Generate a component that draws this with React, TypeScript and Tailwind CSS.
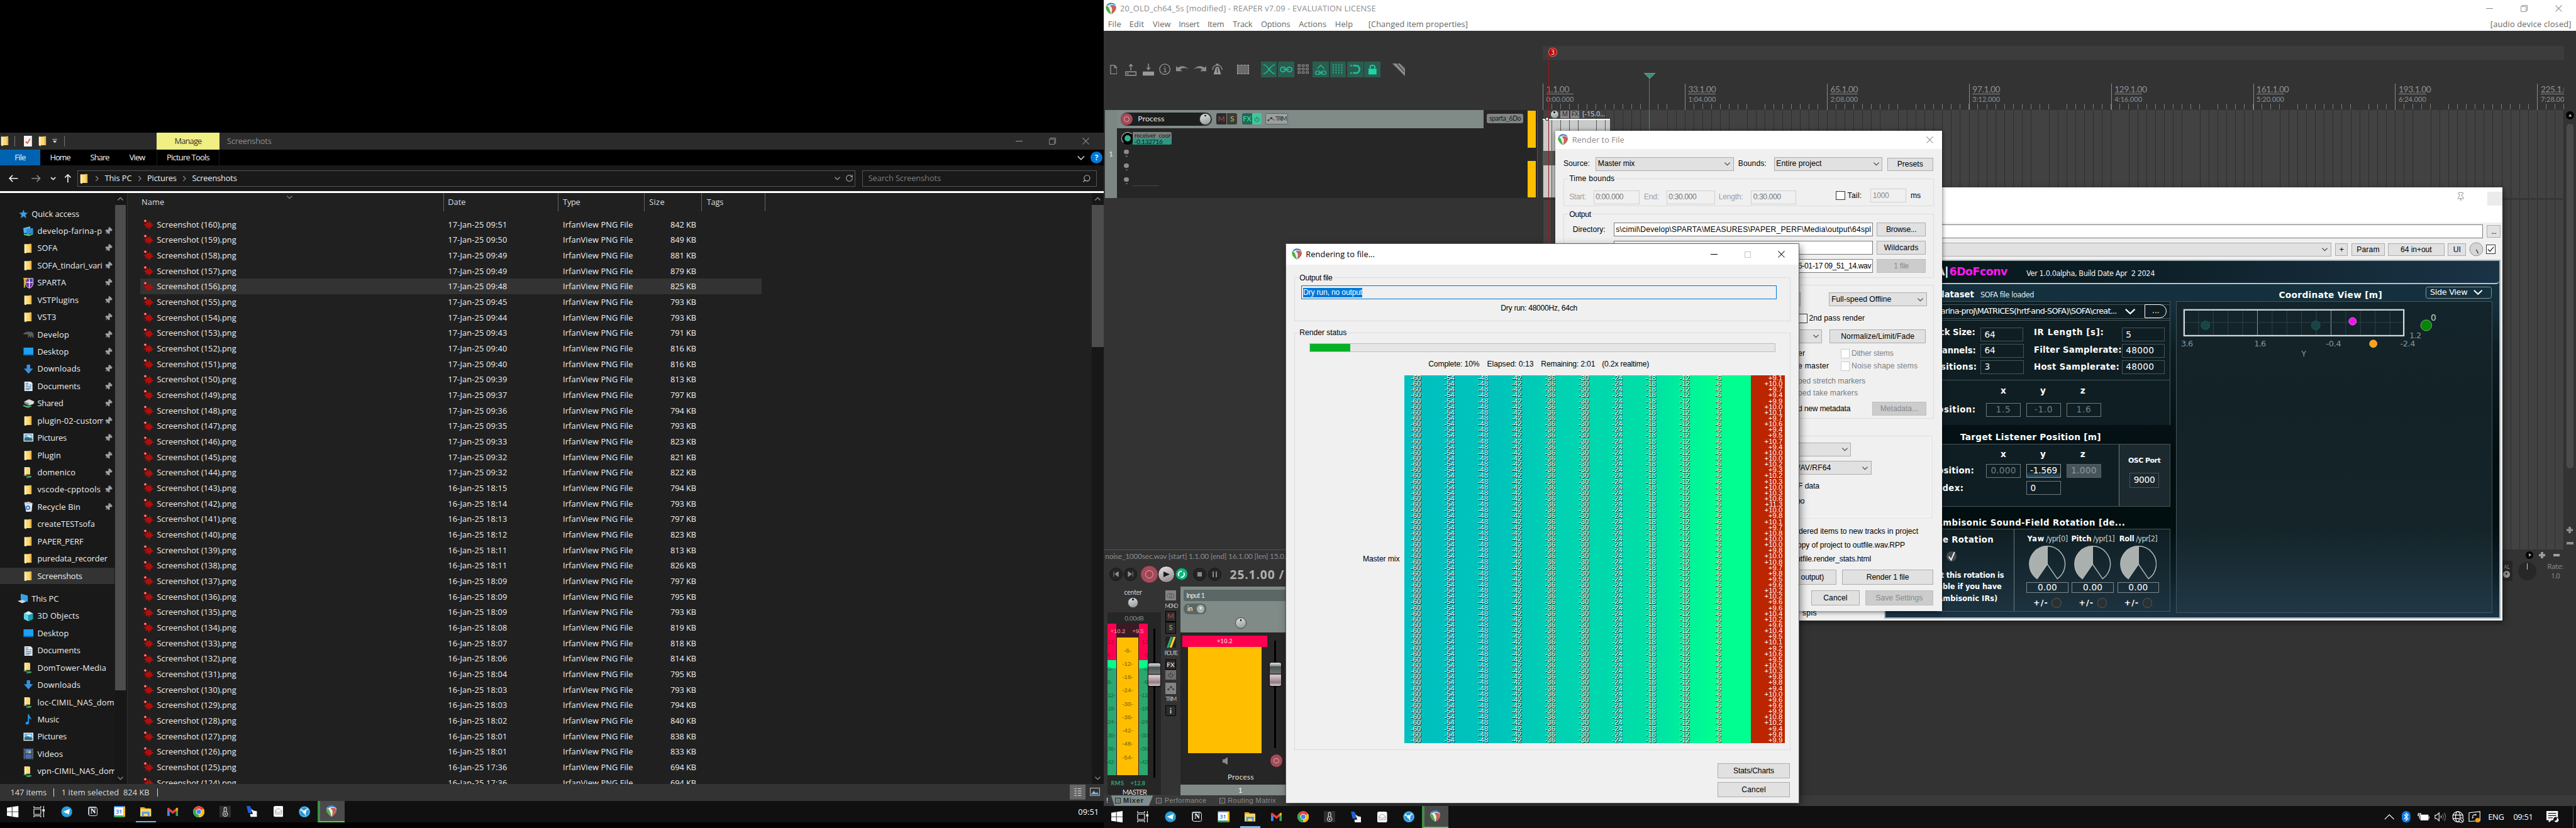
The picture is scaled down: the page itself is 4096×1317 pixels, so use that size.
import React, { useLayoutEffect, useRef } from "react";
import { Pin, Search, Power, RotateCw } from "lucide-react";

type Kids = { children?: React.ReactNode };

/* Single line of text whose tracking is adjusted so that it occupies w pixels. */
function T({ w, c = "", children }: { w: number; c?: string; children: string }) {
  const ref = useRef<HTMLSpanElement>(null);
  useLayoutEffect(() => {
    const el = ref.current!;
    el.style.letterSpacing = "0px";
    const a = el.getBoundingClientRect().width;
    el.style.letterSpacing = "1px";
    const b = el.getBoundingClientRect().width;
    const s = (b - a) / children.length;
    el.style.letterSpacing = `${(w * s - a) / (b - a)}px`;
  }, [w, children]);
  return (
    <span className={`block shrink-0 leading-none ${c}`} style={{ width: w }}>
      <span ref={ref} className="inline-block whitespace-pre">{children}</span>
    </span>
  );
}

/* ---------- icons ---------- */

const Logo = ({ s = 20 }: { s?: number }) => (
  <svg width={s} height={s} viewBox="0 0 20 20" className="shrink-0">
    <path d="M10 0.5C14.5 0.5 19 3 18.6 8.5C18.2 13 13.5 18 10 19.5C6.5 18 1.8 13 1.4 8.5C1 3 5.5 0.5 10 0.5Z" fill="#e9eef0" />
    <path d="M2.4 5.4C4 1.6 7.500 0.3 10.5 0.4C14.5 0.6 17.500 2.5 18.2 5.4C14 1.8 8 2 5 4.8Z" fill="#2f86c9" />
    <path d="M1.6 6C4.8 5.2 6.2 8 7.2 11L10.2 19.4C6 17.5 1.7 13 1.4 8.5Z" fill="#4fae3a" />
    <path d="M8 5C12.5 3.2 18 4.4 18.6 8C18.6 13 14 17.7 10.8 19.2L11.8 12C12 9 10.5 7 8 5Z" fill="#c9605a" />
  </svg>
);

const Folder = () => (
  <svg width="18" height="18" viewBox="0 0 18 18" className="shrink-0">
    <path d="M2 1.5H11V0.5L14 1V16.5H5V18L2 16.5Z" fill="#f9d978" />
    <path d="M11 1.2L14.4 2V16.5H11.5Z" fill="#e8b84e" />
    <path d="M2 1.5L5 2.6V18L2 16.6Z" fill="#fff0b8" />
  </svg>
);
const NetFolder = () => (
  <svg width="18" height="20" viewBox="0 0 18 20" className="shrink-0">
    <path d="M2 1H9.5L12 2V14H2Z" fill="#f9d978" />
    <path d="M2 1L5 2.4V15H2Z" fill="#fff0b8" />
    <path d="M0 14.5L12 16L13.5 17.5L1 16.5Z" fill="#2f9e57" />
    <path d="M5 18.5L14 16.5V18.5L6 20Z" fill="#49b86f" />
  </svg>
);
const Star = () => (
  <svg width="16" height="16" viewBox="0 0 16 16" className="shrink-0">
    <path d="M8 0.5L10 5.7L15.7 6L11.3 9.5L12.8 15.2L8 12L3.2 15.2L4.7 9.5L0.3 6L6 5.7Z" fill="#39a0ec" />
  </svg>
);
const Stack = () => (
  <svg width="18" height="18" viewBox="0 0 18 18" className="shrink-0">
    <path d="M0 4L12 1L13 12L1 13Z" fill="#4fb4ee" />
    <path d="M5 6L17 4L17 13L6 15Z" fill="#2f8fd6" />
    <path d="M1 14L12 15L17 13V15L10 18L1 16Z" fill="#64c28b" />
  </svg>
);
const Shield = () => (
  <svg width="18" height="20" viewBox="0 0 18 20" className="shrink-0">
    <path d="M4 2H17V11C17 15 14 18 11 19C7 18 4 15 4 11Z" fill="#7a2fa0" stroke="#f2f2f2" />
    <path d="M10.5 3V18M5 9H16" stroke="#fff" strokeWidth="1.4" />
    <path d="M11.5 3.5H16V8H11.5ZM5 10H9.5V16Z" fill="#2348c9" />
    <path d="M0 1H6V5L3 3V18H1V5Z" fill="#e3c62e" />
  </svg>
);
const Animal = () => (
  <svg width="18" height="12" viewBox="0 0 18 12" className="shrink-0">
    <path d="M0 4C4 1 8 0 12 1C15 0 18 3 18 6V12H16L15 7L13 12H11.500L11 6L9 11H8L8 5C5 5 3 6 0 5Z" fill="#5d5d5d" />
  </svg>
);
const DesktopI = () => (
  <svg width="18" height="16" viewBox="0 0 18 16" className="shrink-0">
    <rect x="0.500" y="1" width="17" height="13" fill="#1da0f2" />
    <path d="M0.500 12.500H17.500V14.500H0.500Z" fill="#0f6fb8" />
  </svg>
);
const DownI = () => (
  <svg width="18" height="18" viewBox="0 0 18 18" className="shrink-0">
    <path d="M6 1H12V8H17L9 17L1 8H6Z" fill="#3b8fdd" />
  </svg>
);
const DocI = () => (
  <svg width="18" height="18" viewBox="0 0 18 18" className="shrink-0">
    <path d="M2 1H13L16 4V17.500H2Z" fill="#e9eef2" />
    <path d="M4 4H9M4 7H9M11 7H14M4 10H14M4 13H14M4 15H11" stroke="#4a7fae" strokeWidth="1.200" />
  </svg>
);
const DriveI = () => (
  <svg width="20" height="16" viewBox="0 0 20 16" className="shrink-0">
    <path d="M2 5L10 1L19 5L18 9L10 12L2 8Z" fill="#d9dddd" />
    <path d="M2 5L10 8V12L2 8.500Z" fill="#8f9898" />
    <path d="M0 11L9 13L14 12V14L8 16L0 13Z" fill="#49b86f" />
  </svg>
);
const PicI = () => (
  <svg width="18" height="16" viewBox="0 0 18 16" className="shrink-0">
    <rect x="0.500" y="0.500" width="17" height="14" fill="#f2f2f2" />
    <rect x="2" y="2" width="14" height="11" fill="#6fb7e8" />
    <path d="M2 9C6 6 10 7 16 10V13H2Z" fill="#2c6a7a" />
    <path d="M6 5C8 3 12 4 15 6L11 7Z" fill="#fff" />
  </svg>
);
const BinI = () => (
  <svg width="18" height="18" viewBox="0 0 18 18" className="shrink-0">
    <path d="M2 2L16 3L14.500 17L5 18Z" fill="#dfe7ec" />
    <path d="M1 1L10 0L17 3L7 4Z" fill="#b9c7d0" />
    <circle cx="8" cy="10.500" r="3" fill="none" stroke="#1f77d0" strokeWidth="1.800" />
  </svg>
);
const PcI = () => (
  <svg width="19" height="18" viewBox="0 0 19 18" className="shrink-0">
    <path d="M6 1L17 4V14L6 10Z" fill="#2aa3ee" stroke="#8fd0f7" strokeWidth="0.700" />
    <path d="M0 13L8 11L15 14L8 17Z" fill="#d4dadd" />
  </svg>
);
const CubeI = () => (
  <svg width="18" height="18" viewBox="0 0 18 18" className="shrink-0">
    <path d="M9 0L17 4L9 7L1 4Z" fill="#c2f1f7" />
    <path d="M1 4L9 7V18L1 14Z" fill="#5cd3e3" />
    <path d="M17 4L9 7V18L17 14Z" fill="#1a9fb8" />
  </svg>
);
const MusicI = () => (
  <svg width="18" height="18" viewBox="0 0 18 18" className="shrink-0">
    <path d="M8 0H10C10 4 14 5 14 10C13 8 12 7 10 7V14C10 16.500 8.500 18 6.500 18C4.500 18 4 16.500 4 15.500C4 13.500 6 12.500 8 13Z" fill="#1d9bf0" />
  </svg>
);
const VidI = () => (
  <svg width="18" height="20" viewBox="0 0 18 20" className="shrink-0">
    <rect x="0.500" y="0.500" width="17" height="19" fill="#3c4658" />
    <path d="M1.500 1V19M16.500 1V19" stroke="#aab4c2" strokeDasharray="1.500 1.500" />
    <rect x="4" y="2" width="10" height="7" fill="#5a86c4" />
    <rect x="4" y="11" width="10" height="7" fill="#4470b0" />
    <circle cx="11" cy="7" r="2" fill="#c9c560" />
  </svg>
);
const Splat = () => (
  <svg width="20" height="20" viewBox="0 0 20 20" className="shrink-0">
    <path d="M8 5L10 7L12 2.500L13.500 7L16 7L15.500 10L20 11L15.500 13L14.500 16L12.500 14.500L11 20L9 14.500L4 16.500L6 12L1 11L5.500 8.500Z" fill="#b00f0c" />
    <circle cx="4.500" cy="4" r="3" fill="#96100e" />
    <circle cx="4.300" cy="3.600" r="1.700" fill="#dcaca8" />
  </svg>
);
const Chev = ({ c = "#444", s = 12 }: { c?: string; s?: number }) => (
  <svg width={s} height={s} viewBox="0 0 12 12" className="shrink-0">
    <path d="M1.500 4L6 8.500L10.500 4" fill="none" stroke={c} strokeWidth="1.300" />
  </svg>
);
const CloseX = ({ c, s = 12 }: { c: string; s?: number }) => (
  <svg width={s} height={s} viewBox="0 0 12 12" className="shrink-0">
    <path d="M0.500 0.500L11.500 11.500M11.500 0.500L0.500 11.500" stroke={c} strokeWidth="1.100" />
  </svg>
);
const MaxBox = ({ c }: { c: string }) => (
  <svg width="12" height="12" viewBox="0 0 12 12" className="shrink-0">
    <path d="M0.500 2.500H9.500V11.500H0.500ZM2.500 2.500V0.500H11.500V9.500H9.500" fill="none" stroke={c} />
  </svg>
);

/* ---------- file explorer ---------- */

type Nav = [React.FC, string, number, boolean];
const QUICK: Nav[] = [
  [Stack, "develop-farina-p", 112.5, true],
  [Folder, "SOFA", 35, true],
  [Folder, "SOFA_tindari_vari", 113, true],
  [Shield, "SPARTA", 50, true],
  [Folder, "VSTPlugins", 72, true],
  [Folder, "VST3", 33, true],
  [Animal, "Develop", 55.5, true],
  [DesktopI, "Desktop", 54.5, true],
  [DownI, "Downloads", 75, true],
  [DocI, "Documents", 75, true],
  [DriveI, "Shared", 45, true],
  [Folder, "plugin-02-custom", 117, true],
  [PicI, "Pictures", 51, true],
  [Folder, "Plugin", 41, true],
  [NetFolder, "domenico", 66.5, true],
  [Folder, "vscode-cpptools", 110, true],
  [BinI, "Recycle Bin", 75, true],
  [Folder, "createTESTsofa", 100, false],
  [Folder, "PAPER_PERF", 80, false],
  [Folder, "puredata_recorder", 122, false],
  [Folder, "Screenshots", 78, false],
];
const THISPC: Nav[] = [
  [CubeI, "3D Objects", 73, false],
  [DesktopI, "Desktop", 54.5, false],
  [DocI, "Documents", 75, false],
  [NetFolder, "DomTower-Media", 120, false],
  [DownI, "Downloads", 75, false],
  [NetFolder, "loc-CIMIL_NAS_dom", 134, false],
  [MusicI, "Music", 38, false],
  [PicI, "Pictures", 51, false],
  [VidI, "Videos", 44.5, false],
  [NetFolder, "vpn-CIMIL_NAS_dom", 137, false],
];

const FILES: [string, string][] = [
  ["17-Jan-25 09:51", "842"], ["17-Jan-25 09:50", "849"], ["17-Jan-25 09:49", "881"], ["17-Jan-25 09:49", "879"],
  ["17-Jan-25 09:48", "825"], ["17-Jan-25 09:45", "793"], ["17-Jan-25 09:44", "793"], ["17-Jan-25 09:43", "791"],
  ["17-Jan-25 09:40", "816"], ["17-Jan-25 09:40", "816"], ["17-Jan-25 09:39", "813"], ["17-Jan-25 09:37", "797"],
  ["17-Jan-25 09:36", "794"], ["17-Jan-25 09:35", "793"], ["17-Jan-25 09:33", "823"], ["17-Jan-25 09:32", "821"],
  ["17-Jan-25 09:32", "822"], ["16-Jan-25 18:15", "794"], ["16-Jan-25 18:14", "793"], ["16-Jan-25 18:13", "797"],
  ["16-Jan-25 18:12", "823"], ["16-Jan-25 18:11", "813"], ["16-Jan-25 18:11", "826"], ["16-Jan-25 18:09", "797"],
  ["16-Jan-25 18:09", "795"], ["16-Jan-25 18:09", "793"], ["16-Jan-25 18:08", "819"], ["16-Jan-25 18:07", "818"],
  ["16-Jan-25 18:06", "814"], ["16-Jan-25 18:04", "795"], ["16-Jan-25 18:03", "793"], ["16-Jan-25 18:03", "794"],
  ["16-Jan-25 18:02", "840"], ["16-Jan-25 18:01", "838"], ["16-Jan-25 18:01", "833"], ["16-Jan-25 17:36", "694"],
  ["16-Jan-25 17:36", "694"],
];

const NavRow = ({ n, sel }: { n: Nav; sel?: boolean }) => {
  const [Icon, label, w, pin] = n;
  return (
    <div className="flex h-[30px] w-[199px] shrink-0 items-center">
      <div className={`flex h-[28px] w-full items-center overflow-hidden ${sel ? "bg-[#333333]" : ""}`}>
        <div className="ml-[41px] flex w-[24px] shrink-0 items-center"><Icon /></div>
        <div className={`shrink-0 overflow-hidden ${pin ? "w-[114px]" : "w-[134px]"}`}>
          <T w={w} c="py-1">{label}</T>
        </div>
        {pin && <Pin size={14} className="ml-[3px] rotate-45 fill-[#9aa0a4] text-[#9aa0a4]" />}
      </div>
    </div>
  );
};

function Explorer() {
  return (
    <div className="absolute left-0 top-[231px] flex h-[1162px] w-[1920px] flex-col bg-[#202020] font-['Open_Sans',sans-serif] text-[14px] text-[#f0f0f0]">
      <div className="flex h-[29px] items-center bg-[#2b2b2b]">
        <div className="flex w-[272px] items-center">
          <Folder />
          <div className="ml-[7px] h-[18px] w-px bg-[#777]" />
          <svg width="14" height="19" viewBox="0 0 14 19" className="ml-[16px]"><rect width="14" height="19" fill="#f4f4f4" /><path d="M3 10L6 13L11 5" fill="none" stroke="#d2552c" strokeWidth="1.800" /></svg>
          <div className="ml-[10px]"><Folder /></div>
          <svg width="9" height="8" viewBox="0 0 9 8" className="ml-[7px]"><path d="M0.500 0.500H8.500" stroke="#ddd" /><path d="M1 3H8L4.500 7Z" fill="#ddd" /></svg>
          <div className="ml-[12px] h-[18px] w-px bg-[#777]" />
        </div>
        <div className="flex h-full w-[110px] items-center justify-center bg-[#efef83] text-[#333]"><T w={47}>Manage</T></div>
        <T w={77} c="ml-[13px] text-[#8f8f8f]">Screenshots</T>
        <div className="ml-auto flex items-center gap-[46px] pr-[26px]">
          <div className="h-px w-[12px] bg-[#999]" /><MaxBox c="#999" /><CloseX c="#999" />
        </div>
      </div>
      <div className="flex h-[28px] items-center bg-black">
        <div className="flex h-full w-[70px] items-center justify-center bg-[#0063b1]"><T w={19}>File</T></div>
        <T w={35} c="ml-[17px]">Home</T>
        <T w={33} c="ml-[35px]">Share</T>
        <T w={27} c="ml-[35px]">View</T>
        <div className="ml-[20px] flex h-full w-[110px] items-center justify-center border-x border-[#1c1c1c]"><T w={74}>Picture Tools</T></div>
        <div className="ml-auto flex items-center gap-[9px] pr-[3px]">
          <Chev c="#ddd" s={15} />
          <div className="flex size-[20px] items-center justify-center rounded-full bg-[#0078d7] text-[13px] font-bold leading-none">?</div>
        </div>
      </div>
      <div className="flex h-[45px] items-center bg-[#191919]">
        <svg width="134" height="28" viewBox="0 0 134 28" fill="none" strokeWidth="1.800" className="shrink-0">
          <path d="M31 14H17M22 8.500L16.500 14L22 19.500" stroke="#f0f0f0" />
          <path d="M55 14H69M64 8.500L69.500 14L64 19.500" stroke="#888" />
          <path d="M88.500 12L92.500 16L96.500 12" stroke="#f0f0f0" />
          <path d="M118 21V8M113 12.500L118 7.500L123 12.500" stroke="#f0f0f0" />
        </svg>
        <div className="flex h-[28px] w-[1354px] items-center border border-[#535353]">
          <div className="ml-[3px]"><Folder /></div>
          <div className="ml-[7px] -rotate-90"><Chev c="#999" s={11} /></div>
          <T w={47} c="ml-[8px]">This PC</T>
          <div className="ml-[8px] -rotate-90"><Chev c="#999" s={11} /></div>
          <T w={51} c="ml-[8px]">Pictures</T>
          <div className="ml-[8px] -rotate-90"><Chev c="#999" s={11} /></div>
          <T w={78} c="ml-[8px]">Screenshots</T>
          <div className="ml-auto flex items-center gap-[8px] pr-[3px]"><Chev c="#aaa" /><RotateCw size={14} className="text-[#aaa]" /></div>
        </div>
        <div className="ml-[12px] flex h-[28px] w-[408px] items-center border border-[#535353]">
          <T w={126} c="ml-[9px] text-[#7d7d7d]">Search Screenshots</T>
          <Search size={15} className="ml-auto mr-[10px] -scale-x-100 text-[#bbb]" />
        </div>
      </div>
      <div className="h-[3px] shrink-0 bg-white" />
      <div className="flex h-[1028px] shrink-0 overflow-hidden">
        <div className="flex w-[200px] shrink-0 flex-col overflow-hidden bg-[#191919]">
          <div className="mt-[21px] flex h-[30px] shrink-0 items-center"><div className="ml-[33px] w-[22px]"><Star /></div><T w={83}>Quick access</T></div>
          {QUICK.map((n, i) => <NavRow key={i} n={n} sel={i === 20} />)}
          <div className="mt-[10px] flex h-[30px] shrink-0 items-center"><div className="ml-[31px] w-[24px]"><PcI /></div><T w={47}>This PC</T></div>
          {THISPC.map((n, i) => <NavRow key={i} n={n} />)}
        </div>
        <div className="flex w-[19px] shrink-0 flex-col items-center bg-[#171717]">
          <div className="flex h-[21px] rotate-180 items-center"><Chev c="#999" /></div>
          <div className="h-[844px] w-full bg-[#4d4d4d]" />
          <div className="mt-auto flex h-[21px] items-center"><Chev c="#999" /></div>
        </div>
        <div className="w-[3px] shrink-0 border-r border-[#303030] bg-[#191919]" />
        <div className="w-[1677px] overflow-hidden">
          <div className="relative flex h-[32px] items-center">
            <div className="absolute left-[276px] top-[1px]"><Chev c="#888" /></div>
            <T w={40} c="ml-[24px] text-[#dedede]">Name</T>
            <div className="ml-[485px] flex h-full w-[199px] items-center border-l border-[#636363] pl-[7px] text-[#dedede]"><T w={31}>Date</T></div>
            <div className="flex h-full w-[150px] items-center border-l border-[#636363] pl-[8px] text-[#dedede]"><T w={30}>Type</T></div>
            <div className="flex h-full w-[100px] items-center border-l border-[#636363] pl-[8px] text-[#dedede]"><T w={27}>Size</T></div>
            <div className="flex h-full w-[111px] items-center border-x border-[#636363] pl-[8px] text-[#dedede]"><T w={29}>Tags</T></div>
          </div>
          <div className="mt-[9px] flex flex-col">
            {FILES.map(([d, s], i) => (
              <div key={i} className={`ml-[22px] flex h-[27px] w-[1081px] shrink-0 items-center ${i === 4 ? "bg-[#333333]" : ""}`}>
                <div className="ml-[4px] w-[25px]"><Splat /></div>
                <T w={138}>{`Screenshot (${160 - i}).png`}</T>
                <T w={103} c="ml-[368px]">{d}</T>
                <T w={122} c="ml-[97px]">IrfanView PNG File</T>
                <T w={45} c="ml-[65px]">{`${s} KB`}</T>
              </div>
            ))}
          </div>
        </div>
        <div className="flex w-[21px] shrink-0 flex-col items-center bg-[#171717]">
          <div className="flex h-[21px] rotate-180 items-center"><Chev c="#999" /></div>
          <div className="h-[247px] w-full bg-[#4d4d4d]" />
          <div className="mt-auto flex h-[21px] items-center"><Chev c="#999" /></div>
        </div>
      </div>
      <div className="flex h-[29px] items-center bg-[#333333] text-[#dcdcdc]">
        <T w={63} c="ml-[18px]">147 items</T>
        <div className="ml-[12px] h-[14px] w-px bg-[#ddd]" />
        <T w={153} c="ml-[13px]">1 item selected  824 KB</T>
        <div className="ml-[13px] h-[14px] w-px bg-[#ddd]" />
        <div className="ml-auto flex h-full items-center gap-[4px] pr-[4px]">
          <svg width="28" height="26" viewBox="0 0 28 26"><rect width="28" height="26" fill="#666" /><path d="M8 7H12M8 11H12M8 15H12M8 19H12M14 7H20M14 11H20M14 15H20M14 19H20" stroke="#eee" /></svg>
          <svg width="24" height="26" viewBox="0 0 24 26"><rect x="4" y="6" width="16" height="13" fill="none" stroke="#ccc" /><path d="M5 17L10 11L14 15L16 13L19 17Z" fill="#7fb8e8" /></svg>
        </div>
      </div>
    </div>
  );
}

/* ---------- taskbar ---------- */

const TASK: React.ReactNode[] = [
  <svg width="20" height="20" viewBox="0 0 20 20" className="mr-[3px]"><path d="M0 3L8.500 1.700V9.500H0ZM9.500 1.500L20 0V9.500H9.500ZM0 10.500H8.500V18.300L0 17ZM9.500 10.500H20V20L9.500 18.500Z" fill="#fff" /></svg>,
  <svg width="20" height="20" viewBox="0 0 20 20" fill="none" stroke="#eee" strokeWidth="1.300" className="mr-[5px]"><path d="M1 0V3H13V0M1 20V17H13V20M1 5.500H13V14.500H1ZM18 0V5M18 10V20" /><path d="M16.500 6H19.500V9H16.500Z" fill="#eee" /></svg>,
  <svg width="20" height="20" viewBox="0 0 20 20"><circle cx="10" cy="10" r="9.500" fill="#2a9fd8" /><path d="M3.500 10L15.500 5L13.500 15L9.500 12L8 14V11.500Z" fill="#fff" /></svg>,
  <div className="flex size-[16px] items-center justify-center rounded-[3px] border border-[#ddd] bg-[#181818] font-['Liberation_Serif',serif] text-[13px] font-bold leading-none text-white shadow-[-1px_-1px_0_#bbb]">N</div>,
  <div className="flex size-[20px] items-center justify-center rounded-[2px] border-b-[4px] border-l-[2px] border-r-[4px] border-t-[3px] border-b-[#34a853] border-l-[#4285f4] border-r-[#fbbc04] border-t-[#4285f4] bg-white text-[10px] font-semibold leading-none text-[#2f6fe0]">31</div>,
  <svg width="19" height="18" viewBox="0 0 19 18"><path d="M0 1H7L9 3H18V7H0Z" fill="#e9a828" /><rect y="4" width="19" height="13" fill="#fbd667" /><path d="M3 17V9H16V17H13V12H6V17Z" fill="#4a9ce0" /></svg>,
  <svg width="19" height="16" viewBox="0 0 19 16"><path d="M0 2V15H4V7L9.500 11.500L15 7V15H19V2L17 0.500L9.500 6.500L2 0.500Z" fill="#ea4335" /><path d="M0 4V15H4V7Z" fill="#4285f4" /><path d="M19 4V15H15V7Z" fill="#34a853" /><path d="M15 2.200L17 0.500L19 2V4L15 7Z" fill="#fbbc04" /></svg>,
  <svg width="20" height="20" viewBox="0 0 20 20"><circle cx="10" cy="10" r="9.800" fill="#fff" /><path d="M10 10L1.500 5.100A9.800 9.800 0 0 1 18.500 5.100Z" fill="#ea4335" /><path d="M10 10L18.500 5.100A9.800 9.800 0 0 1 10 19.800Z" fill="#fbbc04" /><path d="M10 10L10 19.800A9.800 9.800 0 0 1 1.500 5.100Z" fill="#34a853" /><circle cx="10" cy="10" r="5" fill="#fff" /><circle cx="10" cy="10" r="3.900" fill="#4285f4" /></svg>,
  <svg width="20" height="20" viewBox="0 0 20 20"><rect width="20" height="20" fill="#2e2e2e" /><g fill="none" stroke="#c4c4c4" strokeWidth="1.500"><circle cx="10" cy="14" r="4" /><path d="M8 10V4C8 2 12 2 12 4V10" /></g><circle cx="10" cy="14" r="1.300" fill="#ddd" /></svg>,
  <svg width="18" height="19" viewBox="0 0 18 19"><path d="M0 0H6L10 8L8 12H3Z" fill="#1f62d6" /><path d="M8 5L12 8L18 9V19H7L6 14H11Z" fill="#f4f4f4" /></svg>,
  <svg width="17" height="19" viewBox="0 0 17 19"><rect width="17" height="19" rx="3" fill="#fafafa" /><path d="M3 8L8.500 4L14 8V14H3ZM3 9L8.500 12L14 9" fill="none" stroke="#999" /></svg>,
  <svg width="20" height="20" viewBox="0 0 20 20"><circle cx="10" cy="10" r="9.800" fill="#2593d4" /><circle cx="10" cy="10" r="8" fill="none" stroke="#9bd4f0" strokeWidth="0.800" /><g stroke="#fff" strokeWidth="1.800" fill="none"><path d="M10 10L4 7M10 10L15 5M10 10L12 16" /></g><circle cx="10" cy="10" r="3" fill="#fff" /><circle cx="4.500" cy="7" r="2" fill="#bfe3f5" /><circle cx="15" cy="5.500" r="1.700" fill="#bfe3f5" /></svg>,
  <Logo s={20} />,
];

const TaskIcons = () => (
  <div className="ml-px flex h-full">
    {TASK.map((t, i) => (
      <div
        key={i}
        className={
          i === 12
            ? "flex h-full w-[46px] items-center justify-center border-b-[3px] border-l-[5px] border-b-[#48d848] border-l-[#3f8f45] bg-[#4a4a4a] pr-[3px]"
            : i === 5
              ? "flex h-full w-[46px] flex-col items-center justify-between pt-[10px]"
              : "flex h-full w-[46px] items-center justify-center"
        }
      >
        {t}
        {i === 5 && <div className="h-[3px] w-[35px] bg-[#76b9ed]" />}
      </div>
    ))}
  </div>
);

const Tray = () => (
  <div className="ml-auto flex h-full items-center text-white">
    <svg width="18" height="11" viewBox="0 0 18 11"><path d="M1 10L9 2L17 10" fill="none" stroke="#fff" strokeWidth="1.300" /></svg>
    <svg width="15" height="20" viewBox="0 0 15 20" className="ml-[13px]"><rect width="15" height="20" rx="7" fill="#0a7ce8" /><path d="M4 6L11 13L7.500 16V4L11 7L4 14" fill="none" stroke="#fff" strokeWidth="1.300" /></svg>
    <svg width="21" height="14" viewBox="0 0 21 14" className="ml-[12px]"><rect x="5" y="3" width="14" height="10" fill="#fff" /><path d="M20 6V10M1 2H6V5H1ZM2 0V2M5 0V2M3.500 5V10" stroke="#fff" strokeWidth="1.200" fill="none" /></svg>
    <svg width="21" height="18" viewBox="0 0 21 18" className="ml-[9px]"><path d="M1 6H4L8 2V16L4 12H1Z" fill="none" stroke="#fff" strokeWidth="1.200" /><path d="M11 7Q12.500 9 11 11" stroke="#fff" fill="none" strokeWidth="1.200" /><path d="M14 4.500Q17 9 14 13.500M17 2Q21.500 9 17 16" stroke="#777" fill="none" strokeWidth="1.200" /></svg>
    <svg width="21" height="21" viewBox="0 0 21 21" className="ml-[9px]" fill="none" stroke="#fff" strokeWidth="1.200"><circle cx="10" cy="10" r="9" /><ellipse cx="10" cy="10" rx="4" ry="9" /><path d="M1 7H19M1 13H12" /><circle cx="16" cy="16" r="4" fill="#101010" /><path d="M13.500 13.500L18.500 18.500" /></svg>
    <svg width="22" height="20" viewBox="0 0 22 20" className="ml-[8px]" fill="none" stroke="#fff" strokeWidth="1.200"><path d="M1 3L20 1V17L1 18Z" /><path d="M7 9A4 4 0 0 1 13 7V5M13 7H10.500M7 13V10.500H9" /><circle cx="16" cy="16" r="4" fill="#f59a0c" stroke="none" /></svg>
    <T w={28} c="ml-[12px] text-[14px]">ENG</T>
    <T w={34} c="ml-[16px] text-[14px]">09:51</T>
    <svg width="21" height="20" viewBox="0 0 21 20" className="ml-[24px]"><path d="M0 0H20V16H9L4 20V16H0Z" fill="#fff" /><path d="M3 4H17M3 8H17M3 12H11" stroke="#101010" strokeWidth="1.300" /><circle cx="16.500" cy="15" r="4.500" fill="#101010" /><path d="M18 11.500A4 4 0 1 1 13.500 17A4 4 0 0 0 18 11.500Z" fill="#fff" /></svg>
    <div className="ml-[24px] mr-[5px] h-full w-px bg-[#555]" />
  </div>
);

/* ---------- classic dialog controls ---------- */

const Btn = ({ c, w, t, off }: { c: string; w: number; t: string; off?: boolean }) => (
  <div className={`flex shrink-0 items-center justify-center border ${off ? "border-[#bfbfbf] bg-[#cccccc] text-[#8a8a8a]" : "border-[#adadad] bg-[#e1e1e1]"} ${c}`}>
    <T w={w}>{t}</T>
  </div>
);
const Combo = ({ c, children }: { c: string } & Kids) => (
  <div className={`flex h-[24px] shrink-0 items-center border border-[#adadad] bg-[#e1e1e1] pr-[4px] ${c}`}>
    {children}
    <div className="ml-auto"><Chev s={12} /></div>
  </div>
);
const Check = ({ c, off }: { c: string; off?: boolean }) => (
  <div className={`size-[16px] shrink-0 border bg-white ${off ? "border-[#cccccc]" : "border-[#333]"} ${c}`} />
);

const VALUES = "9.1,10.0,9.7,9.4,9.9,10.0,10.1,9.7,10.6,9.4,9.5,10.7,9.4,10.0,10.0,10.2,9.3,10.2,10.3,10.0,10.3,10.6,11.3,10.0,9.8,10.1,9.7,10.8,10.0,10.0,9.8,10.0,10.8,9.7,9.8,9.5,9.6,10.2,10.2,9.6,9.6,10.4,10.2,9.6,10.4,9.5,10.1,9.2,10.6,9.5,10.5,10.3,9.8,9.8,9.4,10.0,9.6,9.6,9.9,10.8,10.2,9.4,9.8,9.9".split(",");
const DBS = [60, 54, 48, 42, 36, 30, 24, 18, 12, 6];

function RenderingDialog() {
  return (
    <div className="absolute left-[2237px] top-[424px] flex h-[973px] w-[891px] flex-col bg-[#f0f0f0] font-['Liberation_Sans',Arial,sans-serif] text-[13.3px] text-black shadow-[0_0_0_1px_#5a5a5a,3px_4px_14px_rgba(0,0,0,0.55)]">
      <div className="flex h-[37px] items-center bg-white pl-[9px] font-['Open_Sans',sans-serif] text-[14px]">
        <Logo />
        <T w={120} c="ml-[5px]">Rendering to file...</T>
        <div className="ml-auto flex items-center gap-[47px] pr-[24px]">
          <div className="h-px w-[12px] bg-black" />
          <div className="size-[11px] border border-[#c4c4c4]" />
          <CloseX c="#111" />
        </div>
      </div>
      <fieldset className="ml-[14px] mt-[14px] h-[84px] w-[863px] border border-[#dcdcdc]">
        <legend className="ml-[6px] flex h-[16px] items-center px-[2px]"><T w={57}>Output file</T></legend>
        <div className="ml-[11px] mt-[6px] flex h-[24px] w-[827px] items-center border border-[#0078d7] pl-[2px]">
          <div className="flex h-[17px] items-center bg-[#0078d7] text-white"><T w={103}>Dry run, no output</T></div>
        </div>
        <div className="ml-[358px] mt-[7px] flex h-[16px] items-center"><T w={133}>Dry run: 48000Hz, 64ch</T></div>
      </fieldset>
      <fieldset className="ml-[14px] mt-[12px] h-[734px] w-[863px] border border-[#dcdcdc]">
        <legend className="ml-[6px] flex h-[16px] items-center px-[2px]"><T w={82}>Render status</T></legend>
        <div className="ml-[25px] mt-[10px] h-[16px] w-[811px] border border-[#bcbcbc] bg-[#e6e6e6]"><div className="h-full w-[70px] bg-[#06b025]" /></div>
        <div className="ml-[232px] mt-[12px] flex h-[16px] items-center">
          <T w={89}>Complete: 10%</T>
          <T w={81} c="ml-[13px]">Elapsed: 0:13</T>
          <T w={94} c="ml-[13px]">Remaining: 2:01</T>
          <T w={82} c="ml-[12px]">(0.2x realtime)</T>
        </div>
        <div className="ml-[118px] mt-[12px] flex h-[640px] items-center">
          <T w={64}>Master mix</T>
          <div className="ml-[8px] flex h-[640px] w-[662px] overflow-hidden bg-[linear-gradient(90deg,#00bfc0_0%,#00c4bb_25%,#00d2b2_42%,#00e0a6_65%,#00ff90_82%)] text-[12.500px] leading-[10px] text-white">
            <div className="-ml-[9px] flex">
              {DBS.map((d) => (
                <div key={d} className="flex w-[58.4px] flex-col items-center [text-shadow:1px_1px_0_#000]">
                  {VALUES.map((_, i) => <span key={i} className="block h-[10px]">-{d}</span>)}
                </div>
              ))}
            </div>
            <div className="ml-auto flex w-[59px] flex-col items-end bg-[#bb2600] pr-[4px]">
              {VALUES.map((v, i) => <span key={i} className="block h-[10px]">+{v}</span>)}
            </div>
          </div>
        </div>
      </fieldset>
      <Btn c="ml-[750px] mt-[23px] h-[26px] w-[126px]" w={71} t="Stats/Charts" />
      <Btn c="ml-[750px] mt-[7px] h-[26px] w-[126px]" w={42} t="Cancel" />
    </div>
  );
}

function RenderToFile() {
  return (
    <div className="absolute left-[2705px] top-[228px] flex h-[835px] w-[672px] flex-col bg-[#f0f0f0] font-['Liberation_Sans',Arial,sans-serif] text-[13.3px] text-black shadow-[0_1px_8px_rgba(0,0,0,0.6)]">
      <div className="flex h-[31px] items-center bg-white pl-[3px] font-['Open_Sans',sans-serif] text-[14px] text-[#8c8c8c]">
        <Logo />
        <T w={91} c="ml-[6px]">Render to File</T>
        <div className="ml-auto mr-[15px]"><CloseX c="#888" /></div>
      </div>
      <div className="mt-[14px] flex h-[24px] items-center">
        <T w={46} c="ml-[14px]">Source:</T>
        <Combo c="ml-[10px] w-[240px]"><T w={64} c="ml-[3px]">Master mix</T></Combo>
        <T w={49} c="ml-[8px]">Bounds:</T>
        <Combo c="ml-[13px] w-[189px]"><T w={79} c="ml-[3px]">Entire project</T></Combo>
        <Btn c="ml-[8px] h-[22px] w-[80px] self-end" w={45} t="Presets" />
      </div>
      <fieldset className="ml-[14px] mt-[6px] h-[56px] w-[644px] border border-[#dcdcdc]">
        <legend className="ml-[7px] flex h-[16px] items-center px-[2px]"><T w={79}>Time bounds</T></legend>
        <div className="mt-[9px] flex h-[27px] items-end text-[#a0a0a0]">
          <div className="flex h-[24px] items-center">
            <T w={29} c="ml-[9px]">Start:</T>
            <div className="ml-[13px] flex h-full w-[80px] items-center border border-[#cfcfcf] pl-[3px] text-[#777]"><T w={48}>0:00.000</T></div>
            <T w={26} c="ml-[8px]">End:</T>
            <div className="ml-[13px] flex h-full w-[85px] items-center border border-[#cfcfcf] pl-[3px] text-[#777]"><T w={48}>0:30.000</T></div>
            <T w={42} c="ml-[6px]">Length:</T>
            <div className="ml-[14px] flex h-full w-[79px] items-center border border-[#cfcfcf] pl-[3px] text-[#777]"><T w={48}>0:30.000</T></div>
          </div>
          <div className="flex h-[24px] items-center self-start text-black">
            <Check c="ml-[69px]" />
            <T w={25} c="ml-[4px]">Tail:</T>
            <div className="ml-[15px] flex h-full w-[62px] items-center border border-[#cfcfcf] pl-[3px] text-[#8a8a8a]"><T w={28}>1000</T></div>
            <T w={17} c="ml-[8px]">ms</T>
          </div>
        </div>
      </fieldset>
      <fieldset className="ml-[14px] mt-[6px] h-[118px] w-[644px] border border-[#dcdcdc]">
        <legend className="ml-[7px] flex h-[16px] items-center px-[2px]"><T w={38}>Output</T></legend>
        <div className="mt-[6px] flex flex-col gap-[8px]">
          <div className="flex h-[24px] items-center">
            <T w={57} c="ml-[15px]">Directory:</T>
            <div className="ml-[15px] flex h-full w-[450px] items-center border border-[#7a7a7a] bg-white pl-[2px]"><T w={444}>{"s\\cimil\\Develop\\SPARTA\\MEASURES\\PAPER_PERF\\Media\\output\\64spl"}</T></div>
            <Btn c="ml-[7px] h-full w-[85px]" w={53} t="Browse..." />
          </div>
          <div className="flex h-[24px]">
            <div className="ml-[87px] h-full w-[450px] border border-[#7a7a7a] bg-white" />
            <Btn c="ml-[7px] h-full w-[85px]" w={60} t="Wildcards" />
          </div>
          <div className="flex h-[24px]">
            <div className="ml-[87px] flex h-full w-[450px] items-center justify-end border border-[#7a7a7a] bg-white pr-[2px]"><T w={127}>5-01-17 09_51_14.wav</T></div>
            <Btn c="ml-[7px] h-full w-[85px]" w={26} t="1 file" off />
          </div>
        </div>
      </fieldset>
      <div className="ml-[14px] mt-[12px] flex h-[234px] w-[644px] shrink-0 flex-col border border-[#dcdcdc]">
        <div className="mt-[13px] flex h-[24px]">
          <Combo c="w-[411px]" />
          <Combo c="ml-[50px] w-[170px]"><T w={104} c="ml-[3px]">Full-speed Offline</T></Combo>
        </div>
        <div className="mt-[13px] flex h-[16px] items-center"><Check c="ml-[407px]" /><T w={97} c="ml-[3px]">2nd pass render</T></div>
        <div className="mt-[11px] flex h-[24px]">
          <Combo c="w-[449px]" />
          <Btn c="ml-[13px] h-[24px] w-[167px]" w={128} t="Normalize/Limit/Fade" />
        </div>
        <div className="mt-[10px] flex h-[16px] items-center"><T w={12} c="ml-[407px]">er</T><Check c="ml-[62px]" off /><T w={73} c="ml-[3px] text-[#838383]">Dither stems</T></div>
        <div className="mt-[6px] flex h-[16px] items-center"><T w={54} c="ml-[407px]">e master</T><Check c="ml-[20px]" off /><T w={115} c="ml-[3px] text-[#838383]">Noise shape stems</T></div>
        <div className="mt-[10px] flex h-[16px] items-center text-[#7a7a7a]"><T w={117} c="ml-[407px]">ped stretch markers</T></div>
        <div className="mt-[5px] flex h-[16px] items-center text-[#7a7a7a]"><T w={104} c="ml-[407px]">ped take markers</T></div>
        <div className="mt-[7px] flex h-[24px] items-center"><T w={91} c="ml-[407px]">d new metadata</T><Btn c="ml-[38px] h-[24px] w-[94px]" w={66} t="Metadata..." off /></div>
      </div>
      <div className="ml-[14px] mt-[29px] flex h-[143px] w-[641px] shrink-0 flex-col border border-[#dcdcdc] shadow-[inset_-1px_-1px_0_#fff]">
        <Combo c="mt-[11px] w-[499px]" />
        <Combo c="mt-[8px] w-[535px]"><T w={57} c="ml-[406px]">/AV/RF64</T></Combo>
        <div className="mt-[12px] flex h-[16px] items-center"><T w={37} c="ml-[407px]">F data</T></div>
        <div className="mt-[10px] flex h-[16px] items-center"><T w={14} c="ml-[404px]">po</T></div>
      </div>
      <div className="mt-[15px] flex h-[16px] items-center"><T w={208} c="ml-[423px]">dered items to new tracks in project</T></div>
      <div className="mt-[8px] flex h-[16px] items-center"><T w={187} c="ml-[421px]">opy of project to outfile.wav.RPP</T></div>
      <div className="mt-[8px] flex h-[16px] items-center"><T w={130} c="ml-[419px]">utfile.render_stats.html</T></div>
      <div className="mt-[11px] flex h-[26px] items-center">
        <div className="ml-[395px] flex h-full w-[94px] items-center border border-[#adadad] bg-[#e1e1e1] pl-[31px]"><T w={40}>output)</T></div>
        <Btn c="ml-[10px] h-full w-[158px]" w={74} t="Render 1 file" />
      </div>
      <div className="mt-[10px] flex h-[26px] items-center">
        <Btn c="ml-[445px] h-full w-[84px]" w={42} t="Cancel" />
        <Btn c="ml-[10px] h-full w-[118px]" w={82} t="Save Settings" off />
      </div>
    </div>
  );
}

/* ---------- 6DoFconv plug-in ---------- */

const PBox = ({ c, w, t }: { c: string; w: number; t: string }) => (
  <div className={`flex h-[24px] shrink-0 items-center border text-[15px] ${c}`}><T w={w}>{t}</T></div>
);

const Dial = ({ name, nw, arg }: { name: string; nw: number; arg: string }) => (
  <div className="flex w-[73px] flex-col items-center">
    <div className="flex h-[16px] items-center gap-[3px] text-[12.500px]">
      <T w={nw} c="font-bold">{name}</T>
      <T w={37} c="text-[#c8d0d0]">{arg}</T>
    </div>
    <svg width="64" height="62" viewBox="0 0 64 62" className="mt-[3px] shrink-0">
      <path d="M32 32L32 1A31 31 0 0 0 14.500 57.500Z" fill="#aab0ae" />
      <path d="M14.500 57.500A31 31 0 1 1 49.500 57.500L32 32Z" fill="none" stroke="#b4bab8" strokeWidth="1.600" />
      <path d="M32 1V32" stroke="#b4bab8" strokeWidth="1.600" />
    </svg>
    <div className="mt-[2px] flex h-[18px] w-[73px] items-center justify-center border border-[#7d898c] text-[15px]"><T w={34}>0.00</T></div>
    <div className="mt-[8px] flex h-[20px] items-center gap-[6px] text-[14px] font-bold"><T w={26}>+/-</T><div className="size-[17px] rounded-full border border-[#5a5a5a] bg-[#2a2f30]" /></div>
  </div>
);

const XYZ = () => (
  <div className="ml-[85px] flex h-[18px] text-center text-[15px] font-bold leading-[18px]">
    <span className="w-[60px]">x</span><span className="ml-[9px] w-[60px]">y</span><span className="ml-[9px] w-[60px]">z</span>
  </div>
);
const Lab = ({ w, box, t }: { w: number; box: string; t: string }) => (
  <div className={`flex shrink-0 justify-end text-[14.500px] font-bold ${box}`}><T w={w}>{t}</T></div>
);

function PluginWindow() {
  return (
    <div className="absolute left-[3120px] top-[326px] flex h-[753px] w-[1232px] flex-col bg-[#f0f0f0] font-['Liberation_Sans',Arial,sans-serif] text-[13.3px] text-black shadow-[2px_3px_10px_rgba(0,0,0,0.5)]">
      <div className="flex h-[61px] shrink-0 justify-end bg-white">
        <Pin size={17} strokeWidth={1.3} className="mr-[38px] mt-[8px] text-[#777]" />
        <div className="mt-[8px] h-[24px] w-[26px] bg-[#ebebeb]" />
      </div>
      <div className="mt-[4px] flex h-[24px] shrink-0 items-center">
        <div className="h-[24px] w-[1198px] border border-[#7a7a7a] bg-white" />
        <Btn c="ml-[7px] h-[22px] w-[24px]" w={9} t="..." />
      </div>
      <div className="mt-[7px] flex h-[24px] shrink-0 items-center">
        <Combo c="w-[934px]" />
        <Btn c="ml-[7px] h-[22px] w-[22px]" w={7} t="+" />
        <Btn c="ml-[7px] h-[22px] w-[57px]" w={40} t="Param" />
        <Btn c="ml-[6px] h-[22px] w-[98px]" w={54} t="64 in+out" />
        <Btn c="ml-[6px] h-[22px] w-[32px]" w={13} t="UI" />
        <svg width="25" height="25" viewBox="0 0 25 25" className="ml-[5px]"><circle cx="12.500" cy="12.500" r="11.500" fill="#d3d6d4" stroke="#8a8d8b" /><path d="M12.500 13L16 20" stroke="#333" strokeWidth="1.400" /></svg>
        <div className="ml-[5px] flex size-[16px] items-center justify-center border border-[#333] bg-white"><svg width="12" height="10" viewBox="0 0 12 10"><path d="M1 5L4.500 8.500L11 1" fill="none" stroke="#222" strokeWidth="1.400" /></svg></div>
      </div>
      <div className="mt-[6px] flex h-[627px]">
        <div className="flex w-[157px] flex-col justify-end"><T w={37} c="mb-[6px] ml-[3px]">z spls</T></div>
        <div className="flex h-[624px] w-[1072px] flex-col overflow-hidden border-[3px] border-[#aab3b8] bg-[linear-gradient(180deg,#16303f_0%,#14303d_12%,#0c1d22_25%,#020d0f_55%,#020f11_75%,#0c1f27_88%,#1a3447_100%)] font-['DejaVu_Sans',Verdana,sans-serif] text-white">
          <div className="flex h-[40px] shrink-0 items-center rounded-br-[6px] border-b-[3px] border-[#b8c2c6] bg-[linear-gradient(90deg,#07161a_0%,#0b1d24_35%,#1a3346_100%)]">
            <div className="flex w-[109px] justify-end text-[20px] font-bold"><T w={21}>A|</T></div>
            <T w={101} c="ml-[2px] text-[19px] font-bold text-[#ff19f0]">6DoFconv</T>
            <T w={223} c="ml-[33px] mt-[7px] text-[12.500px] text-[#f0f0f0]">{"Ver 1.0.0alpha, Build Date Apr  2 2024"}</T>
          </div>
          <div className="flex">
            {/* parameter column */}
            <div className="ml-[90px] flex w-[405px] shrink-0 flex-col">
              <div className="flex h-[30px] items-center pt-[7px]">
                <Lab box="w-[64px]" w={62} t="dataset" />
                <T w={93} c="ml-[11px] mt-[3px] text-[12.500px] text-[#dfe5e5]">SOFA file loaded</T>
              </div>
              <div className="flex h-[215px] w-[405px] flex-col border-r border-t border-[#46555a] bg-[#0f1e23]">
                <div className="mt-[4px] flex h-[25px] items-center border-y border-[#46555a]">
                  <T w={306} c="ml-[6px] text-[14px]">{"arina-proj\\MATRICES(hrtf-and-SOFA)\\SOFA\\creat..."}</T>
                  <svg width="20" height="12" viewBox="0 0 20 12" className="ml-[14px]"><path d="M2 2L10 9.500L18 2" fill="none" stroke="#fff" strokeWidth="2.400" /></svg>
                  <div className="ml-[15px] flex h-[24px] w-[38px] shrink-0 items-center justify-center rounded-r-full border border-white text-[13px] leading-none">...</div>
                </div>
                <div className="mt-[3px] flex h-[105px] flex-col gap-[4px] border-b border-t border-[#46555a] pt-[12px]">
                  <div className="flex items-center"><Lab box="w-[66px] -mt-[8px]" w={62} t="ck Size:" /><PBox c="ml-[9px] w-[75px] border-[#46555a] pl-[6px]" w={19} t="64" /><T w={122} c="-mt-[8px] ml-[18px] text-[14.500px] font-bold">IR Length [s]:</T><PBox c="ml-[31px] w-[75px] border-[#46555a] pl-[6px]" w={9} t="5" /></div>
                  <div className="flex items-center"><Lab box="w-[67px]" w={69} t="hannels:" /><PBox c="ml-[8px] w-[75px] border-[#46555a] pl-[6px]" w={19} t="64" /><T w={153} c="-mt-[4px] ml-[18px] text-[14.500px] font-bold">Filter Samplerate:</T><PBox c="w-[75px] border-[#46555a] pl-[6px]" w={49} t="48000" /></div>
                  <div className="flex items-center"><Lab box="w-[69px]" w={73} t="ositions:" /><PBox c="ml-[6px] w-[75px] border-[#46555a] pl-[6px]" w={9} t="3" /><T w={149} c="ml-[18px] text-[14.500px] font-bold">Host Samplerate:</T><PBox c="ml-[4px] w-[75px] border-[#46555a] pl-[6px]" w={49} t="48000" /></div>
                </div>
                <div className="mt-[8px]"><XYZ /></div>
                <div className="mt-[13px] flex items-center text-[#717d80]">
                  <Lab box="w-[67px] text-white" w={66} t="osition:" />
                  <PBox c="ml-[18px] w-[60px] justify-center border-[#6d7b80]" w={26} t="1.5" />
                  <PBox c="ml-[10px] w-[60px] justify-center border-[#6d7b80]" w={32} t="-1.0" />
                  <PBox c="ml-[10px] w-[60px] justify-center border-[#6d7b80]" w={26} t="1.6" />
                </div>
              </div>
              <div className="flex h-[33px] items-center pt-[12px]"><T w={245} c="ml-[40px] text-[15px] font-bold">Target Listener Position [m]</T></div>
              <div className="flex h-[109px] border-y border-r border-[#46555a] bg-[#0f1e23]">
                <div className="w-[316px]">
                  <div className="mt-[8px]"><XYZ /></div>
                  <div className="mt-[8px] flex items-center text-[#717d80]">
                    <Lab box="w-[64px] text-white" w={63} t="osition:" />
                    <PBox c="ml-[21px] w-[60px] justify-center border-[#6d7b80]" w={44} t="0.000" />
                    <PBox c="ml-[10px] w-[60px] justify-center border-[#8a979b] bg-[linear-gradient(180deg,#0f1e23_55%,#2f5568_100%)] text-white" w={47} t="-1.569" />
                    <PBox c="ml-[10px] w-[60px] justify-center border-[#56646a] bg-[#47555b] text-[#8e999c]" w={44} t="1.000" />
                  </div>
                  <div className="mt-[6px] flex items-center">
                    <Lab box="w-[46px]" w={48} t="ndex:" />
                    <PBox c="ml-[109px] w-[60px] border-[#6d7b80] pl-[6px]" w={9} t="0" />
                  </div>
                </div>
                <div className="flex w-[89px] flex-col items-center border-l border-[#6d7b80] bg-[#1c292e]">
                  <T w={56} c="mt-[23px] text-[12px] font-bold">OSC Port</T>
                  <div className="mt-[14px] flex h-[27px] w-[52px] items-center justify-center border border-[#46555a] text-[15px]"><T w={37}>9000</T></div>
                </div>
              </div>
              <div className="flex h-[39px] items-center pt-[17px]"><T w={329} c="-ml-[2px] text-[14.500px] font-bold">Ambisonic Sound-Field Rotation [de...</T></div>
              <div className="flex h-[144px] border-y border-r border-[#46555a] bg-[linear-gradient(180deg,#0f1e23,#1d3340)]">
                <div className="w-[134px] border-r border-[#6d7b80] text-[12.500px] font-bold">
                  <div className="mt-[11px] flex w-[98px] justify-end text-[14.500px]"><T w={94}>le Rotation</T></div>
                  <div className="ml-[16px] mt-[12px] flex size-[18px] items-center justify-center rounded-full bg-[#444b4d]"><svg width="16" height="18" viewBox="0 0 16 18"><path d="M3 9L7 15L13 1" fill="none" stroke="#fff" strokeWidth="2" /></svg></div>
                  <div className="mt-[15px] flex h-[20px] w-[116px] items-center justify-end"><T w={110}>t this rotation is</T></div>
                  <div className="flex h-[20px] w-[112px] items-center justify-end"><T w={111}>able if you have</T></div>
                  <div className="flex h-[20px] w-[105px] items-center justify-end"><T w={105}>Ambisonic IRs)</T></div>
                </div>
                <div className="flex gap-[6px] pl-[21px] pt-[9px]">
                  <Dial name="Yaw" nw={30} arg="/ypr[0]" />
                  <Dial name="Pitch" nw={35} arg="/ypr[1]" />
                  <Dial name="Roll" nw={26} arg="/ypr[2]" />
                </div>
              </div>
            </div>
            {/* coordinate view */}
            <div className="ml-[10px] flex w-[550px] flex-col">
              <div className="flex h-[30px] items-center">
                <T w={180} c="ml-[179px] mt-[10px] text-[15px] font-bold">Coordinate View [m]</T>
                <div className="ml-[75px] flex h-[20px] w-[115px] items-center rounded-[4px] border border-[#8a979b] pl-[7px] text-[14px]">
                  <T w={65}>Side View</T>
                  <svg width="18" height="11" viewBox="0 0 18 11" className="ml-[9px]"><path d="M2 2L9 8.500L16 2" fill="none" stroke="#fff" strokeWidth="2.200" /></svg>
                </div>
              </div>
              <div className="relative h-[542px] w-[550px] border border-[#46555a] bg-[linear-gradient(180deg,#13242b_0%,#132226_30%,#142428_72%,#203746_100%)]">
                <svg width="548" height="100" viewBox="0 0 548 100" className="block">
                  {Array.from({ length: 14 }, (_, i) => (
                    <path key={i} d={`M${12.500 + 25.600 * (i + 1)} 14V58`} stroke={i === 4 || i === 9 ? "#9aa4a6" : "#33444a"} />
                  ))}
                  <path d="M13 36H395" stroke="#33444a" />
                  <rect x="13" y="14" width="382" height="45" fill="none" stroke="#d4d8d8" strokeWidth="2.500" />
                  <circle cx="50" cy="41" r="7.500" fill="#164546" stroke="#1f6060" />
                  <circle cx="242" cy="41" r="7.500" fill="#164546" stroke="#1f6060" />
                  <circle cx="306" cy="34" r="6.500" fill="#f910f0" stroke="#ffb0fa" strokeWidth="0.700" />
                  <circle cx="342" cy="73" r="6.500" fill="#ff9f12" stroke="#ffd9a0" strokeWidth="0.700" />
                  <circle cx="434" cy="41" r="9.500" fill="#078307" stroke="#8fd08f" strokeWidth="0.800" />
                </svg>
                <div className="-mt-[34px] flex text-[14px] text-[#8d979a]">
                  <T w={20} c="ml-[8px]">3.6</T><T w={20} c="ml-[107px]">1.6</T><T w={26} c="ml-[105px]">-0.4</T><T w={26} c="ml-[103px]">-2.4</T>
                </div>
                <div className="ml-[217px] mt-[4px] text-[14px] leading-none text-[#8d979a]">Y</div>
                <T w={20} c="absolute left-[405px] top-[52px] text-[14px] text-[#8d979a]">1.2</T>
                <span className="absolute left-[442px] top-[21px] text-[15px] leading-none text-[#c8cfd0]">0</span>
              </div>
            </div>
          </div>
        </div>
      </div>
    </div>
  );
}

/* ---------- REAPER main window ---------- */

const MENU: [string, number, number][] = [
  ["File", 23, 7], ["Edit", 26, 14], ["View", 31, 15], ["Insert", 36, 14], ["Item", 29, 14], ["Track", 34, 15],
  ["Options", 51, 15], ["Actions", 48, 15], ["Help", 31, 15], ["[Changed item properties]", 173, 27],
];
const BARS: [string, string, number][] = [
  ["1.1.00", "0:00.000", 40], ["33.1.00", "1:04.000", 48], ["65.1.00", "2:08.000", 48], ["97.1.00", "3:12.000", 48],
  ["129.1.00", "4:16.000", 56], ["161.1.00", "5:20.000", 56], ["193.1.00", "6:24.000", 56], ["225.1.00", "7:28.000", 56],
];
const Tile = ({ children }: Kids) => (
  <div className="flex h-[28px] w-[28px] items-center justify-center bg-[#2a5d50]">{children}</div>
);
const Round = ({ s, c, children }: { s: number; c: string } & Kids) => (
  <div className={`flex shrink-0 items-center justify-center rounded-full ${c}`} style={{ width: s, height: s }}>{children}</div>
);
const FaderCap = () => (
  <div className="relative h-[40px] w-[20px] rounded-[3px] bg-[linear-gradient(180deg,#d8dddd_0%,#9aa3a3_12%,#4b5252_18%,#6d7474_45%,#222_48%,#e0ccd2_54%,#8f7b82_85%,#d9cdd1_100%)] shadow-[0_1px_3px_#000]" />
);
const Rec = ({ s }: { s: number }) => (
  <Round s={s} c="bg-[radial-gradient(circle,#9c4250,#a84c5a_60%,#6a2a34)]"><div className="size-[46%] rounded-full border-2 border-[#e0b4b8]" /></Round>
);
const Knob = ({ s }: { s: number }) => (
  <Round s={s} c="bg-[linear-gradient(160deg,#dfe2e2,#8f9696)] border border-[#444]"><div className="mb-[60%] size-[3px] rounded-full bg-black" /></Round>
);

const Side = ({ right }: { right?: boolean }) => (
  <div className={`flex w-[15.500px] flex-col overflow-hidden bg-[linear-gradient(180deg,#ff0050_0_63px,#00ff8c_63px_78px,#2aa870_78px)] pt-[20px] text-[#00000070] ${right ? "items-end" : "items-start"}`}>
    {["12", "6", "0", "6", "12", "18", "24", "30", "36", "42"].map((n, i) => (
      <span key={i} className="flex h-[23.200px] shrink-0 items-center tracking-tighter">{i < 2 ? n : right ? `-${n}` : `${n}-`}</span>
    ))}
  </div>
);

function Mixer() {
  return (
    <div className="flex h-[364px] w-[317px]">
      <div className="flex w-[99px] flex-col items-center pl-[6px]">
        <T w={31} c="mr-[4px] mt-[5px] text-[11.500px] text-[#d0d0d0]">center</T>
        <div className="mr-[4px] mt-[2px]"><Knob s={19} /></div>
        <div className="mt-[8px] flex h-[317px] w-[93px] flex-col bg-[#262626]">
          <T w={33} c="ml-[30px] mt-[4px] text-[11px] text-[#8a8a8a]">0.00dB</T>
          <div className="mt-[5px] flex">
            <div className="relative flex h-[263px] w-[70px] gap-px bg-[#3a1a24] font-['Liberation_Sans',Arial,sans-serif] text-[10.500px]">
              <Side />
              <div className="mt-[24px] flex w-[37px] flex-col items-center bg-[#ffbf00] pt-[11px] text-[#7a5c00]">
                {[6, 12, 18, 24, 30, 36, 42, 48, 54].map((n) => <span key={n} className="flex h-[23.200px] shrink-0 items-center">-{n}-</span>)}
              </div>
              <Side right />
              <div className="absolute left-[5px] top-[7px] flex text-[#ff9ab4]"><T w={26}>+10.2</T><T w={20} c="ml-[12px]">+9.5</T></div>
            </div>
            <div className="flex w-[23px] flex-col items-center">
              <div className="mt-[8px] h-[60px] w-[3px] bg-black" /><FaderCap /><div className="h-[160px] w-[3px] bg-black" />
            </div>
          </div>
          <div className="flex text-[10px] font-bold text-[#2aa870]"><T w={23} c="ml-[6px] mt-[4px]">RMS</T><T w={26} c="ml-[11px] mt-[4px]">+12.8</T></div>
          <T w={42} c="ml-[26px] mt-[5px] text-[12px] text-[#e0e0e0]">MASTER</T>
        </div>
      </div>
      <div className="flex w-[34px] flex-col items-center text-[10px] text-[#b8b8b8] [&>*]:shrink-0">
        <div className="mt-[7px] flex h-[18px] w-[19px] items-center justify-center bg-[#848484]"><svg width="14" height="10" viewBox="0 0 14 10" fill="none" stroke="#555"><circle cx="5" cy="5" r="4" /><circle cx="9" cy="5" r="4" /></svg></div>
        <T w={20} c="mt-[4px]">MONO</T>
        <div className="mt-[4px] flex h-[19px] w-[19px] items-center justify-center border border-black bg-[#2c2c2c] text-[12px] leading-none text-[#b05058]">M</div>
        <div className="flex h-[20px] w-[19px] items-center justify-center border border-black bg-[#2c2c2c] text-[12px] leading-none text-[#b8b050]">S</div>
        <svg width="19" height="19" viewBox="0 0 19 19" className="mt-[6px]"><rect width="19" height="19" fill="#222" /><path d="M2 19L9 0H13L6 19Z" fill="#2aa870" /><path d="M7 19L14 0H18L11 19Z" fill="#ffd22a" /></svg>
        <T w={22} c="mt-[4px]">ROUTE</T>
        <div className="mt-[6px] flex h-[18px] w-[19px] items-center justify-center border border-black bg-[#2c2c2c] text-[11px] leading-none text-white">FX</div>
        <div className="mt-px flex h-[16px] w-[19px] items-center justify-center bg-[#6e6e6e]"><Power size={10} className="text-[#222]" /></div>
        <div className="mt-[6px] flex h-[19px] w-[19px] items-center justify-center bg-[#848484]"><svg width="13" height="8" viewBox="0 0 13 8"><path d="M2 6L6.500 2L11 6" stroke="#444" fill="none" /><circle cx="2" cy="6" r="2" fill="#444" /><circle cx="6.500" cy="2" r="2" fill="#444" /><circle cx="11" cy="6" r="2" fill="#444" /></svg></div>
        <T w={18} c="mt-[4px]">TRIM</T>
        <div className="mt-[6px] flex h-[19px] w-[19px] items-center justify-center rounded-b-[3px] border border-black bg-[#2c2c2c] text-[13px] font-bold leading-none text-[#ddd]">i</div>
      </div>
      <div className="flex w-[184px] flex-col bg-[#262626] [&>*]:shrink-0">
        <div className="h-[80px] bg-[#808a86] pt-[6px]">
          <div className="ml-[5px] flex h-[20px] items-center rounded-l-[3px] bg-[#5b6764]"><T w={32} c="ml-[5px] text-[11.500px] text-[#eee]">Input 1</T></div>
          <div className="flex">
            <div className="ml-[5px] mt-[4px] flex h-[19px] w-[40px] items-center justify-between rounded-[8px] bg-[#5b6764] px-[3px]"><T w={9} c="ml-[4px] text-[11.500px] text-white">in</T><Round s={14} c="bg-[#a8b0ae] text-[8px] text-[#eee]">▼</Round></div>
            <div className="ml-[50px] mt-[28px]"><Knob s={20} /></div>
          </div>
        </div>
        <div className="mt-[6px] flex">
          <div className="ml-[3px] flex w-[148px] flex-col items-center">
            <div className="flex h-[19px] w-full items-center justify-center bg-[#ff0050] text-[10px] font-bold text-[#ffc0cc]"><T w={27}>+10.2</T></div>
            <div className="h-[185px] w-[128px] bg-[#ffbf00]" />
          </div>
          <div className="ml-[4px] flex w-[20px] flex-col items-center pt-[8px]"><div className="h-[39px] w-[3px] bg-black" /><FaderCap /><div className="h-[108px] w-[3px] bg-black" /></div>
        </div>
        <div className="mt-[3px] flex items-center">
          <svg width="9" height="14" viewBox="0 0 9 14" className="ml-[73px]"><path d="M0 4H3L9 0V14L3 10H0Z" fill="#8a8a8a" /></svg>
          <div className="ml-[74px]"><Rec s={21} /></div>
        </div>
        <T w={46} c="ml-[82px] mt-[11px] text-[12.500px] text-[#e6e6e6]">Process</T>
        <div className="mt-auto flex h-[19px] items-center justify-center bg-[#808a86] pl-[24px] text-[12px] text-white">1</div>
      </div>
    </div>
  );
}

function TrackPanel() {
  return (
    <div className="ml-[2px] flex h-[154px] w-[752px] bg-[#262626] font-['Lato','Open_Sans',sans-serif]">
      <div className="flex w-[20px] flex-col items-center justify-center bg-[#7c8783] text-[13px] text-[#e6e6e6]">1</div>
      <div className="w-[638px]">
        <div className="flex h-[32px] items-center bg-[#808a86]">
          <div className="ml-[7px] flex h-[23px] w-[159px] items-center rounded-full bg-[#1d1f1f]">
            <Rec s={21} />
            <T w={46} c="ml-[9px] text-[13.500px] text-[#e6e6e6]">Process</T>
            <div className="ml-auto mr-px"><Knob s={21} /></div>
          </div>
          <div className="ml-[7px] flex h-[20px] w-[18px] items-center justify-center rounded-l-[3px] bg-[#2a2b2a] text-[13px] text-[#b84a4a]">M</div>
          <div className="ml-px flex h-[20px] w-[18px] items-center justify-center rounded-r-[3px] bg-[#3a3c38] text-[13px] text-[#c8c060]">S</div>
          <div className="ml-[8px] flex h-[20px] w-[18px] items-center justify-center rounded-l-[3px] bg-[#1f6a56] text-[12px] text-[#4ce0b0]">FX</div>
          <div className="flex h-[20px] w-[16px] items-center justify-center rounded-r-[3px] bg-[#3fc79c]"><Power size={10} className="text-[#14503e]" /></div>
          <div className="ml-[7px] flex h-[20px] w-[39px] items-center justify-center rounded-[2px] border border-[#5c6462] bg-[#9aa09e] text-[10.500px] text-[#333]">
            <svg width="14" height="8" viewBox="0 0 14 8"><path d="M1 6L7 2L13 6" stroke="#333" fill="none" /><circle cx="7" cy="2" r="1.800" fill="#333" /><circle cx="2" cy="6" r="1.500" fill="#333" /></svg><T w={19}>TRIM</T>
          </div>
        </div>
        <div className="ml-[8px] mt-[7px] flex h-[22px] items-center">
          <Round s={22} c="bg-black border-2 border-[#ccc] border-r-black border-b-black"><div className="size-[11px] rounded-full bg-[#35b090]" /></Round>
          <div className="-ml-[2px] flex h-[22px] w-[68px] flex-col overflow-hidden rounded-r-[3px] bg-[#7b7f7e] text-[11px] text-[#151515]">
            <div className="flex h-[11px] items-center pl-[3px]"><T w={63}>receiver_coor</T></div>
            <div className="flex h-[11px] items-center bg-[#2d9780] pl-[3px]"><T w={49}>-0.132716</T></div>
          </div>
        </div>
        <div className="ml-[13px] mt-[8px] flex flex-col gap-[10px]">
          {[0, 1, 2].map((i) => <div key={i} className="flex h-[14px] flex-col items-start"><div className="size-[8px] rounded-full bg-[#8c8c8c]" /><div className="ml-[3px] mt-[2px] size-[3px] rounded-full bg-[#666]" /></div>)}
        </div>
        <div className="ml-[27px] mt-px h-px w-[47px] bg-[#444]" />
      </div>
      <div className="w-[77px] pl-[6px] pt-[7px]"><div className="flex h-[16px] w-[63px] items-center justify-center rounded-[3px] bg-[#808483] text-[11.500px] text-[#1a1a1a]"><T w={55}>sparta_6Do</T></div></div>
      <div className="flex w-[17px] border-r-2 border-[#e0104c]">
        <div className="mt-[2px] flex w-[14px] flex-col"><div className="h-[64px] bg-[#ffbf00]" /><div className="mt-[23px] h-[64px] bg-[#ffbf00]" /></div>
      </div>
    </div>
  );
}

function Reaper() {
  return (
    <div className="absolute left-[1920px] top-0 flex h-[1402px] w-[2560px] flex-col bg-[#333333] font-['Open_Sans',sans-serif]">
      <div className="flex h-[30px] shrink-0 items-center bg-white pl-[2px] text-[14px] text-[#8c8c8c]">
        <Logo s={21} />
        <T w={445} c="ml-[5px]">20_OLD_ch64_5s [modified] - REAPER v7.09 - EVALUATION LICENSE</T>
        <div className="ml-auto flex items-center gap-[48px] pr-[24px]"><div className="h-px w-[12px] bg-[#888]" /><MaxBox c="#888" /><CloseX c="#888" /></div>
      </div>
      <div className="flex h-[24px] shrink-0 items-center bg-white text-[14px] text-[#666]">
        {MENU.map(([t, w, m]) => <div key={t} className="flex" style={{ marginLeft: m }}><T w={w}>{t}</T></div>)}
        <T w={141} c="ml-auto mr-[8px]">[audio device closed]</T>
      </div>
      <div className="flex h-[902px] shrink-0">
        <div className="w-[763px] shrink-0">
          <div className="mt-[53px] flex h-[28px] items-center text-[#9a9a9a]">
            <svg width="13" height="17" viewBox="0 0 13 17" className="ml-[10px]"><path d="M1 1H8L12 5V16H1ZM8 1V5H12" fill="none" stroke="#9a9a9a" strokeWidth="1.300" /></svg>
            <svg width="20" height="22" viewBox="0 0 20 22" className="ml-[14px]" fill="none" stroke="#9a9a9a" strokeWidth="1.500"><path d="M1 14.500H19V20.500H1ZM10 12V2M7 5L10 1.500L13 5M3 17.500H6" /></svg>
            <svg width="20" height="22" viewBox="0 0 20 22" className="ml-[10px]"><path d="M0 14H20V21H0Z" fill="#9a9a9a" /><path d="M10 0V10M7 7L10 10.500L13 7" fill="none" stroke="#9a9a9a" strokeWidth="1.500" /></svg>
            <svg width="20" height="20" viewBox="0 0 20 20" className="ml-[9px]" fill="none" stroke="#9a9a9a" strokeWidth="1.300"><circle cx="10" cy="10" r="9" /><path d="M8 8.500H10.500V14.500M7.500 14.500H13M10 5V6.500" /></svg>
            <svg width="22" height="14" viewBox="0 0 22 14" className="ml-[9px]"><path d="M0 1L3 4C8 0 16 0 22 7C17 4 11 4 7 7L11 10H0Z" fill="#8c8c8c" /></svg>
            <svg width="22" height="14" viewBox="0 0 22 14" className="ml-[9px] -scale-x-100"><path d="M0 1L3 4C8 0 16 0 22 7C17 4 11 4 7 7L11 10H0Z" fill="#8c8c8c" /></svg>
            <svg width="21" height="20" viewBox="0 0 21 20" className="ml-[9px]"><path d="M8 6H13L17 19H4Z" fill="#9a9a9a" /><path d="M10.500 8V16" stroke="#333" strokeWidth="1.500" /><path d="M2 11C3 5 7 2.500 10.500 2.500C14 2.500 18 5 19 11" fill="none" stroke="#8c8c8c" strokeWidth="1.800" /><circle cx="10.500" cy="2" r="2" fill="#9a9a9a" /></svg>
            <div className="ml-[23px] h-[16px] w-[21px] border border-dashed border-[#aaa] bg-[#6a6a6a]" />
            <div className="ml-[21px] flex gap-[2px]">
              <Tile><svg width="22" height="18" viewBox="0 0 22 18" fill="none" stroke="#23bd98" strokeWidth="1.500"><path d="M1 1C9 1 13 17 21 17M1 17C9 17 13 1 21 1" /></svg></Tile>
              <Tile><svg width="22" height="12" viewBox="0 0 22 12" fill="none" stroke="#23bd98" strokeWidth="1.800"><rect x="1" y="2" width="9" height="8" rx="4" /><rect x="12" y="2" width="9" height="8" rx="4" /><path d="M6 6H16" /></svg></Tile>
              <div className="flex h-[28px] w-[28px] items-center justify-center"><svg width="20" height="18" viewBox="0 0 20 18" fill="none" stroke="#aaa"><path d="M1 1H5V4H1ZM8 1H12V4H8ZM15 1H19V4H15ZM1 7H5V10H1ZM8 7H12V10H8ZM15 7H19V10H15ZM1 13H5V16H1ZM8 13H12V16H8ZM15 13H19V16H15Z" /></svg></div>
              <Tile><svg width="20" height="22" viewBox="0 0 20 22" fill="none" stroke="#23bd98" strokeWidth="1.600"><path d="M4 9L10 3L16 9" /><rect x="1" y="13" width="8" height="6" rx="3" /><rect x="11" y="13" width="8" height="6" rx="3" /><path d="M6 16H14" /></svg></Tile>
              <Tile><svg width="20" height="20" viewBox="0 0 20 20" stroke="#23bd98" strokeWidth="1.500" strokeDasharray="3 1.500"><path d="M2 1V19M7 1V19M12 1V19M17 1V19" /></svg></Tile>
              <Tile><svg width="20" height="18" viewBox="0 0 20 18" fill="none" stroke="#23bd98" strokeWidth="3"><path d="M6 2.500H11C19 2.500 19 15.500 11 15.500H6" /><path d="M1 2.500H4M1 15.500H4" strokeWidth="2.500" /></svg></Tile>
              <Tile><svg width="16" height="19" viewBox="0 0 16 19"><rect x="1" y="8" width="14" height="10" fill="#1fd3a4" /><path d="M4 8V5C4 1 12 1 12 5V8" fill="none" stroke="#1fd3a4" strokeWidth="2" /></svg></Tile>
            </div>
            <svg width="22" height="22" viewBox="0 0 22 22" className="ml-[21px]"><path d="M0 0H14L22 7V22Z" fill="#8c8c8c" /><path d="M8 0L20 14M14 0L22 9" stroke="#333" strokeWidth="1.300" /></svg>
          </div>
          <div className="mt-[56px]"><TrackPanel /></div>
        </div>
        <div className="relative w-[1776px] shrink-0 overflow-hidden">
          <div className="mt-[26px] h-[24px] bg-[#3c3c3c]" />
          <div className="mt-[42px] flex h-[45px] w-[2000px] bg-[repeating-linear-gradient(90deg,#777_0_1px,transparent_1px_15.44px)] bg-[length:100%_10px] bg-bottom bg-no-repeat font-['Lato','Open_Sans',sans-serif] text-[#8f8f8f]">
            {BARS.map(([a, b, w]) => (
              <div key={a} className="w-[247.100px] shrink-0 border-l border-[#8a8a8a] pl-[5px] pt-[2px]">
                <T w={w} c="text-[15px]">{a}</T>
                <div className="h-px w-[48px] bg-[#8a8a8a]" />
                <T w={48} c="mt-[3px] text-[12px]">{b}</T>
              </div>
            ))}
          </div>
          <div className="h-[154px] bg-[#424242] bg-[repeating-linear-gradient(90deg,#2e2e2e_0_1px,transparent_1px_15.44px)]">
            <div className="flex h-[16px] items-center pl-[13px] text-[11px] text-[#ddd]">
              <Knob s={15} />
              <div className="ml-[3px] flex h-[13px] w-[15px] items-center justify-center bg-[#8a8a8a] text-[#222]">M</div>
              <div className="ml-[2px] flex h-[13px] w-[16px] items-center justify-center bg-[#8a8a8a] text-[#222]">FX</div>
              <T w={40} c="ml-[5px] text-[12px]">[-15.0...</T>
            </div>
            <div className="h-[56px] w-[117px] border-t-[3px] border-white bg-[#c9cbca] bg-[repeating-linear-gradient(90deg,#555_0_1px,transparent_1px_15.44px)]" />
            <div className="h-[25px] w-[117px] bg-[#565856]" />
            <div className="h-[56px] w-[117px] bg-[#c9cbca] bg-[repeating-linear-gradient(90deg,#555_0_1px,transparent_1px_15.44px)]" />
          </div>
          <div className="h-[3px] bg-[#363636]" />
          <div className="h-[608px] bg-[#424242] bg-[repeating-linear-gradient(90deg,#2e2e2e_0_1px,transparent_1px_15.44px)]" />
          <div className="absolute left-[185px] top-[83px] h-[819px] w-px bg-[#3b8f7c]" />
          <svg width="20" height="10" viewBox="0 0 20 10" className="absolute left-[176px] top-[73px]"><path d="M0 0H20L10 10Z" fill="#3b8f7c" stroke="#9ac0b6" strokeWidth="0.700" /></svg>
          <div className="absolute left-[10px] top-[36px] h-[866px] w-px bg-[#a01818]" />
          <div className="absolute left-[10px] top-[29px] flex h-[16px] w-[15px] items-center justify-center rounded-[7px] border border-[#e08080] bg-[#c00000] text-[11px] leading-none text-white">3</div>
          <div className="absolute left-[4px] top-[149px] size-[7px] rounded-full border-2 border-black bg-white" />
        </div>
        <div className="flex w-[21px] flex-col items-center pt-[140px]">
          <Round s={14} c="bg-black"><svg width="6" height="6" viewBox="0 0 6 6"><path d="M0 5L3 0L6 5Z" fill="#aaa" /></svg></Round>
          <div className="mt-[7px] h-[600px] w-[12px] rounded-[5px] bg-[#4b4b4b]" />
          <svg width="11" height="11" viewBox="0 0 11 11" className="mb-[15px] mt-auto"><path d="M5.500 0V11M0 5.500H11" stroke="#8f8f8f" strokeWidth="4" /></svg>
          <div className="mb-[9px] h-[4px] w-[12px] bg-[#8f8f8f]" />
        </div>
      </div>
      <div className="flex h-[428px] shrink-0">
        <div className="w-[317px] shrink-0 border-t border-[#555] font-['Lato','Open_Sans',sans-serif]">
          <T w={314} c="ml-[2px] mt-[4px] text-[13px] text-[#8c8c8c]">noise_1000sec.wav [start] 1.1.00 [end] 16.1.00 [len] 15.0.</T>
          <div className="mt-[8px] flex h-[34px] items-center pl-[9px]">
            <Round s={23} c="bg-[#242424] border border-[#161616]"><svg width="10" height="9" viewBox="0 0 10 9"><path d="M1 0V9M9 0L3 4.500L9 9Z" fill="#8c8c8c" stroke="#8c8c8c" /></svg></Round>
            <div className="ml-[3px]"><Round s={23} c="bg-[#242424] border border-[#161616]"><svg width="10" height="9" viewBox="0 0 10 9"><path d="M9 0V9M1 0L7 4.500L1 9Z" fill="#8c8c8c" stroke="#8c8c8c" /></svg></Round></div>
            <div className="ml-[6px]"><Rec s={30} /></div>
            <Round s={29} c="bg-[linear-gradient(160deg,#e6e6e6,#8c7f84)] border border-[#222]"><svg width="11" height="10" viewBox="0 0 11 10"><path d="M0 0L11 5L0 10Z" fill="#1a1a1a" /></svg></Round>
            <div className="ml-px"><Round s={22} c="bg-[#14b57c] border border-[#0c5a40]"><svg width="14" height="14" viewBox="0 0 14 14" fill="none" stroke="#fff" strokeWidth="2"><path d="M3 10A5 5 0 0 1 8 2M11 4A5 5 0 0 1 6 12" /></svg></Round></div>
            <div className="ml-[9px]"><Round s={23} c="bg-[#242424] border border-[#161616]"><div className="size-[8px] bg-[#8c8c8c]" /></Round></div>
            <div className="ml-[3px]"><Round s={23} c="bg-[#242424] border border-[#161616]"><div className="h-[9px] w-[8px] border-x-[3px] border-[#8c8c8c]" /></Round></div>
            <T w={95} c="ml-[15px] font-['Open_Sans',sans-serif] text-[21px] font-bold text-[#b0b0b0]">25.1.00 /</T>
          </div>
          <div className="mt-[4px]"><Mixer /></div>
        </div>
        <div className="ml-auto flex h-[70px] w-[150px] flex-col">
          <div className="flex h-[20px] items-center pl-[63px]">
            <Round s={13} c="bg-black"><svg width="6" height="6" viewBox="0 0 6 6"><path d="M1 0L6 3L1 6Z" fill="#aaa" /></svg></Round>
            <svg width="11" height="11" viewBox="0 0 11 11" className="ml-[9px]"><path d="M5.500 0V11M0 5.500H11" stroke="#a0a0a0" strokeWidth="4" /></svg>
            <div className="ml-[15px] h-[4px] w-[11px] bg-[#a0a0a0]" />
          </div>
          <div className="flex items-center">
            <div className="flex h-[35px] w-[40px] flex-col items-end justify-center gap-[2px] bg-[#272727] pr-[5px] text-[9px] leading-none text-[#999]">AL<Round s={12} c="bg-[#999] text-[7px] text-[#222]">▼</Round></div>
            <div className="ml-[9px]"><Round s={32} c="bg-[#272727]"><div className="mb-[16px] h-[12px] w-px bg-[#ccc]" /></Round></div>
            <div className="ml-[19px] flex flex-col items-center gap-[4px] text-[12.500px] text-[#8f8f8f]"><T w={28}>Rate:</T><T w={15}>1.0</T></div>
          </div>
        </div>
      </div>
      <div className="flex h-[18px] shrink-0 items-center bg-[#3a3a3a] font-['Liberation_Sans',Arial,sans-serif] text-[12px] text-[#8c8c8c]">
        <span className="ml-[4px] text-white">!</span>
        <div className="ml-[5px] flex h-full w-[73px] items-center bg-[#7f8d8d] text-[#262626] [clip-path:polygon(0_0,100%_0,90%_100%,8%_100%)]">
          <div className="ml-[7px] flex size-[10px] items-center justify-center border border-[#262626]"><CloseX c="#262626" s={6} /></div>
          <T w={36} c="ml-[4px] font-bold">Mixer</T>
        </div>
        <div className="ml-[5px] flex size-[10px] items-center justify-center border border-[#8c8c8c]"><CloseX c="#8c8c8c" s={6} /></div>
        <T w={73} c="ml-[5px]">Performance</T>
        <div className="ml-[22px] flex size-[10px] items-center justify-center border border-[#8c8c8c]"><CloseX c="#8c8c8c" s={6} /></div>
        <T w={84} c="ml-[5px]">Routing Matrix</T>
      </div>
    </div>
  );
}

export default function App() {
  return (
    <div className="h-[1317px] w-[4096px] overflow-hidden bg-black">
      <div className="relative h-[1440px] w-[4480px] overflow-hidden bg-black [zoom:0.9142857]">
        <Explorer />
        <div className="absolute left-0 top-[1393px] flex h-[38px] w-[1920px] items-center bg-[#101010] font-['Open_Sans',sans-serif] text-white">
          <TaskIcons />
          <T w={36} c="ml-auto mr-[9px] text-[14px]">09:51</T>
        </div>
        <Reaper />
        <PluginWindow />
        <RenderToFile />
        <RenderingDialog />
        <div className="absolute left-[1920px] top-[1402px] flex h-[38px] w-[2560px] items-center bg-[#101010] font-['Open_Sans',sans-serif] text-white">
          <TaskIcons />
          <Tray />
        </div>
      </div>
    </div>
  );
}
